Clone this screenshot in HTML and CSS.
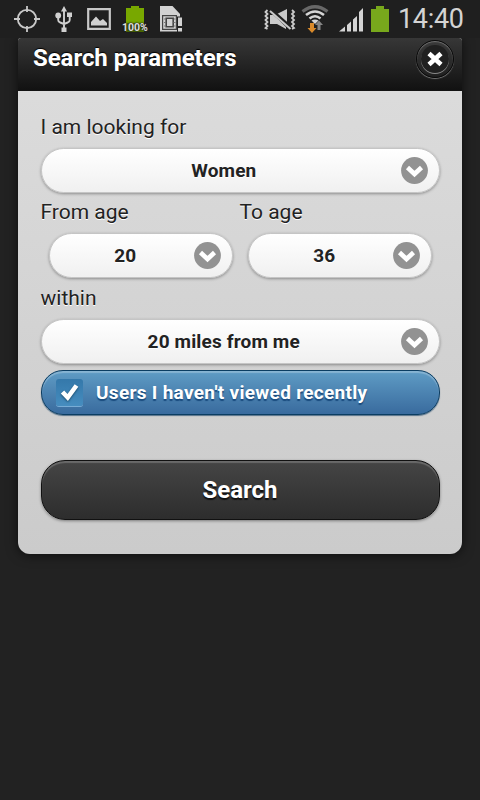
FILE: index.html
```html
<!DOCTYPE html>
<html lang="en">
<head>
<meta charset="utf-8">
<title>Search parameters</title>
<link rel="stylesheet" href="styles.css">
</head>
<body>
<header class="statusbar">
  <div class="status-group">
    <svg class="ic-target" width="26" height="26" viewBox="0 0 26 26" fill="none" stroke="#c8c8c8" stroke-width="1.8"><circle cx="13" cy="13" r="9.2"/><path d="M13 0v6M13 20v6M0 13h6M20 13h6"/></svg>
    <svg class="ic-usb" width="18" height="26" viewBox="0 0 18 26" fill="#d0d0d0"><path d="M9 0l3 5.500H6z"/><circle cx="3.200" cy="9.500" r="2.900"/><path d="M12 6.500h5v4.500h-5zM6.500 21.500h5V26h-5z"/><path d="M9 4v19M3.200 10v4q0 2 2 2.500l3.800 1.500M14.700 10v4q0 2-2 2.500l-3.700 1.500" fill="none" stroke="#d0d0d0" stroke-width="1.900"/></svg>
    <svg class="ic-photo" width="24" height="22" viewBox="0 0 24 22"><path d="M1.200 1.200h21.600v19.600H1.200z" fill="none" stroke="#c8c8c8" stroke-width="2.200"/><path d="M4 17.500V14l5-5.500 4 4.500 3-2 4 4v2.500z" fill="#d0d0d0"/></svg>
    <div class="charge"><svg width="18" height="26" viewBox="0 0 18 26"><path d="M0 2h5V0h8v2h5v24H0z" fill="#78a800"/><path d="M0 17h18v9H0z" fill="#4c6c00"/></svg><span class="charge-label">100%</span></div>
    <svg class="ic-sim" width="24" height="26" viewBox="0 0 24 26"><path d="M0 0h12.500L20 8v17.500H0z" fill="#d2d2d2"/><path d="M2.600 9.600h13.800v13.800H2.600z" fill="none" stroke="#444" stroke-width="1.200"/><path d="M6.200 12.200h7v8.600h-7z" fill="none" stroke="#444" stroke-width="1.600"/><path d="M4 13h2M4 16.500h2M4 20h2M13.500 13h2M13.500 16.500h2M13.500 20h2" stroke="#777" stroke-width="1"/><path d="M17 10.500h6V26h-6z" fill="#222"/><path d="M18 11.500h4v8.500h-4zM18 22h4v3.500h-4z" fill="#d2d2d2"/></svg>
  </div>
  <div class="status-group">
    <svg class="ic-mute" width="32" height="22" viewBox="0 0 32 22" fill="#cacaca"><path d="M6 6h4l12 12v2L13 15H6z"/><path d="M12 5.500L23 0v14.500z"/><path d="M5.500 0L27 19" stroke="#202020" stroke-width="4"/><path d="M6 2l20.500 18" stroke="#cacaca" stroke-width="2"/><path d="M3.500 1L1.500 3l2 2-2 2 2 2-2 2 2 2-2 2 2 2-2 2 2 1M28 1l2 2-2 2 2 2-2 2 2 2-2 2 2 2-2 2 2 2-2 1" fill="none" stroke="#cacaca" stroke-width="1.800"/></svg>
    <svg class="ic-wifi" width="28" height="28" viewBox="0 0 28 28" fill="none"><path d="M1.500 6.500Q14-3 26.500 6.500" stroke="#686868" stroke-width="3.200"/><path d="M5 10q9-7 18 0M8.500 13.500q5.500-4.500 11 0" stroke="#d6d6d6" stroke-width="2.600"/><path d="M10.500 15.500q3.500-2 7 0L14 19z" fill="#d6d6d6"/><path d="M9 18h4v5h2.500L11 28l-4.500-5H9z" fill="#d98a2b"/><path d="M18 15.500l4 4.500h-2.500v5h-3v-5H14z" fill="#858585"/></svg>
    <svg class="ic-signal" width="25" height="24" viewBox="0 0 25 24" fill="#d4d4d4"><path d="M0 23.500l6-5v5zM8 17l4-3.500v10H8zM14 11.500L18 8v15.500h-4zM20 4l4-4v23.500h-4z"/></svg>
    <svg class="ic-battery" width="18" height="26" viewBox="0 0 18 26"><path d="M0 3h5V0h8v3h5v23H0z" fill="#78a81c"/></svg>
    <span class="clock">14:40</span>
  </div>
</header>
<main class="dialog">
  <div class="dialog-header">
    <h1 class="title">Search parameters</h1>
    <button class="close" aria-label="Close"><svg width="28" height="28" viewBox="0 0 28 28"><path d="M8 8.500l12 11M20 8.500L8 19.500" stroke="#fff" stroke-width="4.600"/></svg></button>
  </div>
  <form class="form">
    <label class="label">I am looking for</label>
    <div class="select"><span class="value">Women</span><svg class="arrow" width="27" height="27" viewBox="0 0 27 27"><circle cx="13.500" cy="13.500" r="13.400" fill="#929292"/><path d="M6.500 10.500l7 6.500 7-6.500" fill="none" stroke="#fff" stroke-width="4.600"/></svg></div>
    <div class="ages">
      <div class="age">
        <label class="label">From age</label>
        <div class="select"><span class="value">20</span><svg class="arrow" width="27" height="27" viewBox="0 0 27 27"><circle cx="13.500" cy="13.500" r="13.400" fill="#929292"/><path d="M6.500 10.500l7 6.500 7-6.500" fill="none" stroke="#fff" stroke-width="4.600"/></svg></div>
      </div>
      <div class="age">
        <label class="label">To age</label>
        <div class="select"><span class="value">36</span><svg class="arrow" width="27" height="27" viewBox="0 0 27 27"><circle cx="13.500" cy="13.500" r="13.400" fill="#929292"/><path d="M6.500 10.500l7 6.500 7-6.500" fill="none" stroke="#fff" stroke-width="4.600"/></svg></div>
      </div>
    </div>
    <label class="label">within</label>
    <div class="select"><span class="value">20 miles from me</span><svg class="arrow" width="27" height="27" viewBox="0 0 27 27"><circle cx="13.500" cy="13.500" r="13.400" fill="#929292"/><path d="M6.500 10.500l7 6.500 7-6.500" fill="none" stroke="#fff" stroke-width="4.600"/></svg></div>
    <div class="toggle">
      <span class="check"><svg width="20" height="20" viewBox="0 0 20 20"><path d="M2.500 9l5.200 5.500 8.800-12" fill="none" stroke="#fff" stroke-width="4.600"/></svg></span>
      <span class="toggle-text">Users I haven't viewed recently</span>
    </div>
    <button class="submit" type="button">Search</button>
  </form>
</main>
</body>
</html>
```
FILE: styles.css
```css
* { box-sizing: border-box; }

body {
  margin: 0;
  height: 800px;
  background: #222;
  font-family: Roboto, "Liberation Sans", sans-serif;
  color: #222;
  overflow: hidden;
}

.statusbar {
  position: relative;
  height: 38px;
  background: #1f1f1f;
  display: flex;
  justify-content: space-between;
  padding: 6px 16px 0 14px;
}

.status-group { display: flex; align-items: flex-start; }
.status-group svg { flex: none; display: block; }
.ic-usb { margin-left: 15px; }
.ic-photo { margin: 2px 0 0 14px; }
.ic-sim { margin-left: 16px; }
.ic-mute { margin-top: 3px; }
.ic-wifi { margin: -1px 0 0 5px; }
.ic-signal { margin: 2px 0 0 10px; }
.ic-battery { margin-left: 7px; }

.charge { position: relative; width: 18px; margin-left: 15px; }

.charge-label {
  position: absolute;
  left: -4px;
  top: 15px;
  font-size: 10.5px;
  line-height: 13px;
  font-weight: 700;
  color: #ddd;
  text-shadow: 0 0 2px #222, 0 0 2px #222;
}

.clock {
  width: 66px;
  margin-left: 9px;
  margin-top: -3px;
  font-size: 27px;
  line-height: 32px;
  letter-spacing: -0.3px;
  color: #d4d4d4;
  white-space: nowrap;
}

.dialog {
  width: 444px;
  height: 516px;
  margin: 0 auto;
  border-radius: 3px 3px 12px 12px;
  background: linear-gradient(#ddd, #cbcbcb);
  box-shadow: 0 1px 12px rgba(0, 0, 0, .6);
}

.dialog-header {
  height: 53px;
  padding: 3px 8px 0 15px;
  display: flex;
  justify-content: space-between;
  align-items: flex-start;
  border-radius: 3px 3px 0 0;
  background: linear-gradient(#373737, #111);
}

.title {
  margin: 2px 0 0;
  font-size: 24px;
  line-height: 30px;
  font-weight: 700;
  letter-spacing: -0.06px;
  color: #fff;
  text-shadow: 0 -1px 1px #000;
}

.close {
  width: 38px;
  height: 38px;
  margin-top: -1px;
  padding: 0;
  border: 1px solid #090909;
  border-radius: 50%;
  display: flex;
  align-items: center;
  justify-content: center;
  background: linear-gradient(#3a3a3a, #202020);
  box-shadow: 0 1px 1px #777, inset 0 1px 1px #777;
}

.close svg {
  border-radius: 50%;
  background: #202020;
  box-shadow: 0 1px 0 #8a8a8a;
}

.form { padding: 22px 22px 0; }

.label {
  display: block;
  height: 35px;
  padding-left: 0.5px;
  font-size: 21px;
  line-height: 28px;
  text-shadow: 0 1px 0 #fff;
}

.select {
  height: 45px;
  margin: 0 0.5px;
  border: 1px solid #c5c5c5;
  border-radius: 23px;
  display: flex;
  align-items: center;
  padding: 0 10.5px 0 12px;
  background: linear-gradient(#fff, #f0f0f0);
  box-shadow: 0 1px 3px rgba(0, 0, 0, .35);
}

.value {
  flex: 1;
  padding-left: 20px;
  padding-right: 27px;
  text-align: center;
  font-size: 19px;
  font-weight: 700;
  letter-spacing: 0.15px;
  text-shadow: 0 1px 0 #fff;
}

.arrow { flex: none; }

.ages { display: flex; height: 86px; margin-top: 5px; }
.age { width: 199px; }
.age .select { width: 184px; margin-left: 8.5px; }
.age .value { padding-left: 17px; padding-right: 22px; }

.toggle {
  height: 45px;
  margin: 6px 0.5px 0;
  padding-left: 14.5px;
  display: flex;
  align-items: center;
  border: 1px solid #0b3d62;
  border-radius: 22px;
  background: linear-gradient(#5f9cc5, #396b9e);
  box-shadow: 0 1px 1px rgba(55, 90, 120, .8), inset 0 2px 1px rgba(255, 255, 255, .25);
}

.check {
  width: 27px;
  height: 27px;
  display: flex;
  align-items: center;
  justify-content: center;
  border-radius: 3px;
  background: linear-gradient(#3478aa, #468dbf);
  box-shadow: 0 1px 0 #78acd5;
}

.check svg { filter: drop-shadow(0 1px 1px #174766); }

.toggle-text {
  margin-left: 13px;
  font-size: 19px;
  font-weight: 700;
  letter-spacing: 0.3px;
  color: #fff;
  text-shadow: 0 2px 1px #194b7e;
}

.submit {
  display: block;
  width: 399px;
  height: 60px;
  margin: 45px 0.5px 0;
  padding: 0 0 1px;
  border: 1px solid #111;
  border-radius: 24px;
  background: linear-gradient(#454545, #2d2d2d);
  box-shadow: 0 1px 3px rgba(0, 0, 0, .4), inset 0 2px 1px rgba(255, 255, 255, .2);
  font: 700 24px Roboto, "Liberation Sans", sans-serif;
  color: #fff;
  text-shadow: 0 2px 1px #111;
}
```
